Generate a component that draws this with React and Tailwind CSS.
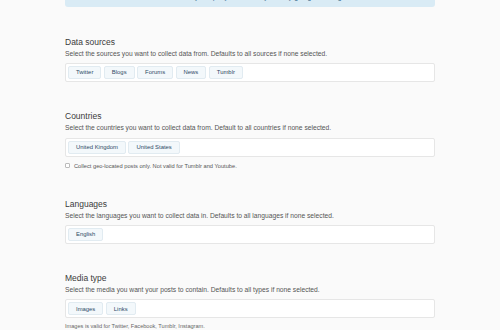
import React from 'react';

const sections = [
    {
        title: 'Data sources',
        desc: 'Select the sources you want to collect data from. Defaults to all sources if none selected.',
        tags: ['Twitter', 'Blogs', 'Forums', 'News', 'Tumblr'],
    },
    {
        title: 'Countries',
        desc: 'Select the countries you want to collect data from. Default to all countries if none selected.',
        tags: ['United Kingdom', 'United States'],
        checkbox: 'Collect geo-located posts only. Not valid for Tumblr and Youtube.',
    },
    {
        title: 'Languages',
        desc: 'Select the languages you want to collect data in. Defaults to all languages if none selected.',
        tags: ['English'],
    },
    {
        title: 'Media type',
        desc: 'Select the media you want your posts to contain. Defaults to all types if none selected.',
        tags: ['Images', 'Links'],
        note: 'Images is valid for Twitter, Facebook, Tumblr, Instagram.',
    },
];

function Section({ title, desc, tags, checkbox, note }) {
    return (
        <div className="mb-[29px]">
            <div className="text-[8.5px] leading-[10px] text-[#3a3a3a] mb-[3px]">{title}</div>
            <div className="text-[6.7px] leading-[8px] text-[#555] mb-[5.3px] whitespace-nowrap">{desc}</div>
            <div className="bg-white border border-[#e6e6e6] rounded-[2px] p-[2px] flex gap-[2.5px]">
                {tags.map(tag => (
                    <span
                        key={tag}
                        className="h-[13px] px-[7px] flex items-center bg-[#f3f8fb] border border-[#e1ebf1] rounded-[2px] text-[5.9px] text-[#2e4a66] whitespace-nowrap"
                    >
                        {tag}
                    </span>
                ))}
            </div>
            {checkbox && (
                <label className="mt-[5.3px] flex items-center gap-[4px] text-[5.7px] leading-[8px] text-[#555]">
                    <span className="w-[5px] h-[5px] border border-[#bbb] rounded-[1px] bg-white" />
                    {checkbox}
                </label>
            )}
            {note && (
                <div className="mt-[4px] text-[5.6px] leading-[8px] text-[#666]">{note}</div>
            )}
        </div>
    );
}

export default function App() {
    return (
        <div className="w-[500px] h-[330px] overflow-hidden bg-[#fafafa] font-['Liberation_Sans',Arial,sans-serif]">
            <div className="w-[370px] mx-auto">
                <div className="h-[27px] -mt-[20px] bg-[#d9ebf5] rounded-b-[3px] flex items-end justify-center pb-[6.5px] text-[7px] leading-[8px] text-[#3b6f92]">
                    You can edit your query filters at any time by going to settings
                </div>
                <div className="h-[30px]" />
                {sections.map(s => (
                    <Section key={s.title} {...s} />
                ))}
            </div>
        </div>
    );
}
